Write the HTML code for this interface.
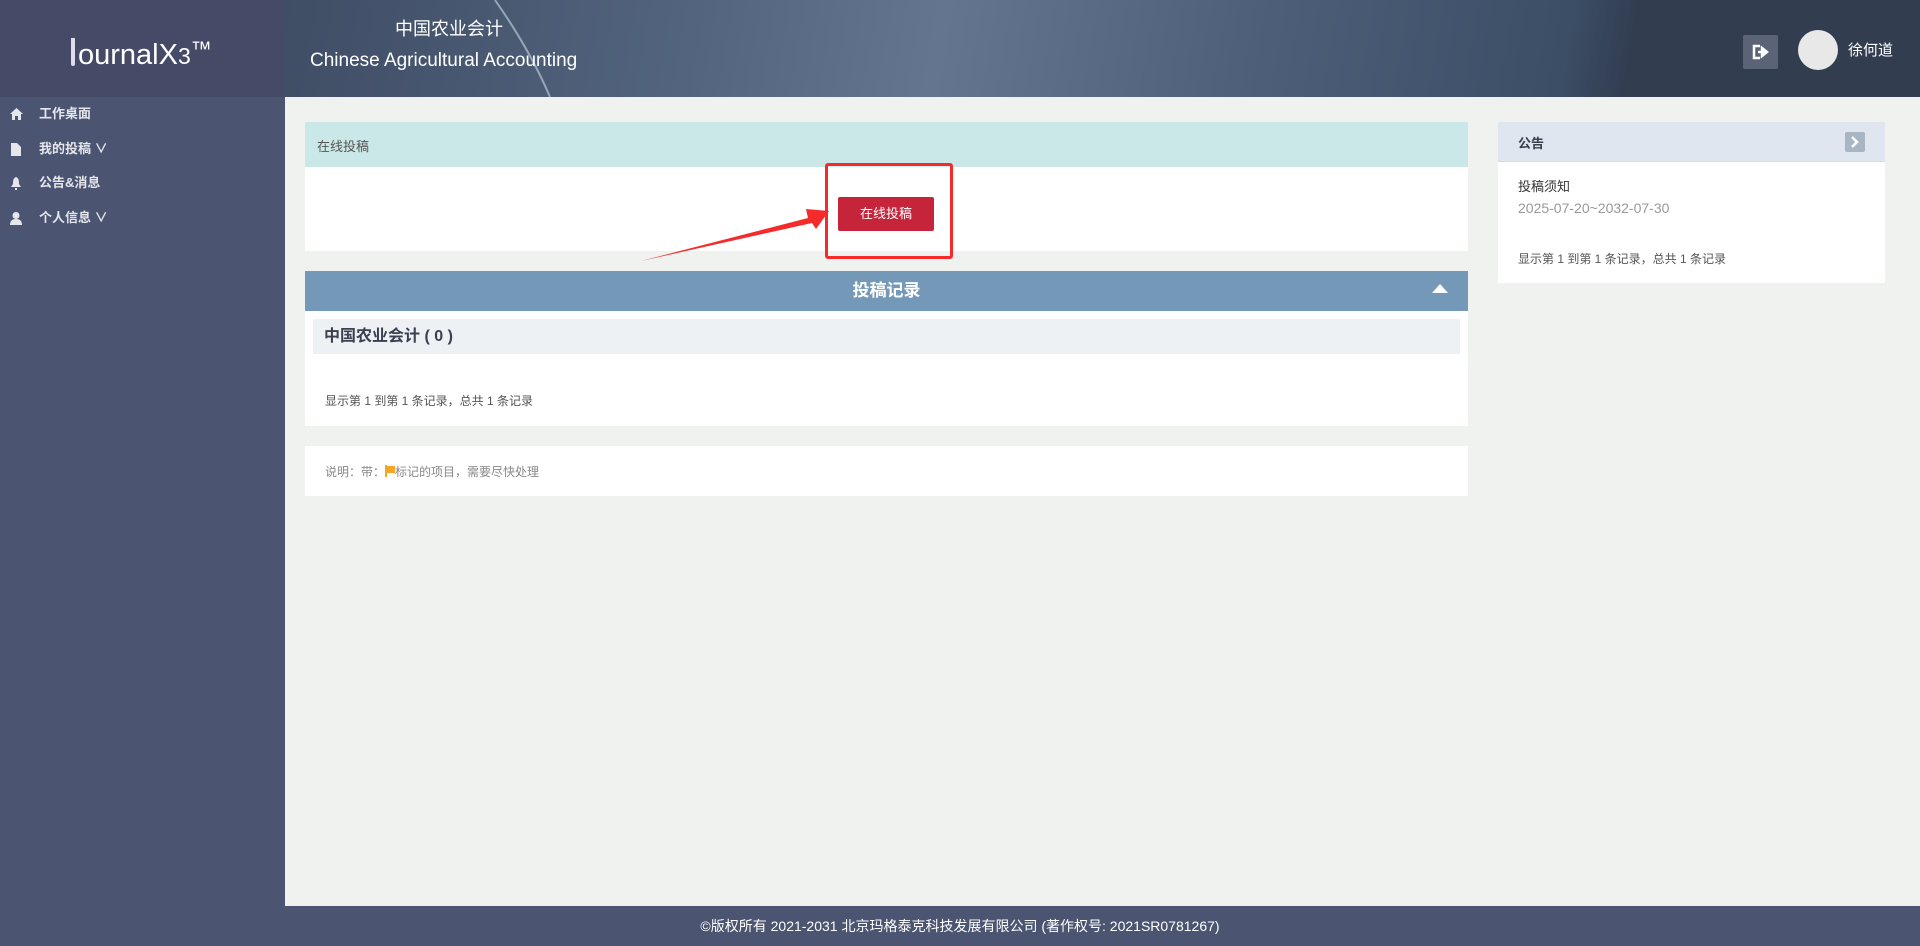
<!DOCTYPE html>
<html><head><meta charset="utf-8"><style>
*{margin:0;padding:0;box-sizing:border-box}
body{width:1920px;height:946px;overflow:hidden;background:#f0f2ef;font-family:"Liberation Sans","Noto Sans CJK SC",sans-serif;position:relative}
.a{position:absolute}
.logo{left:0;top:0;width:285px;height:97px;background:#454b66}
.hdr{left:285px;top:0;width:1635px;height:97px;background:linear-gradient(100deg,#3f4d65 0%,#53647e 25%,#64768f 40%,#4d5e78 60%,#3c4e66 78%,#323d50 82%,#323d50 100%)}
.side{left:0;top:97px;width:285px;height:809px;background:#4b5470}
.nav{left:0;width:285px;height:20px;color:#e4e6ec;font-size:13px;font-weight:bold;line-height:20px}
.nav span{position:absolute;left:39px}
.foot{left:0;top:906px;width:1920px;height:40px;background:#4b5470;color:#fff;font-size:14px;text-align:center;line-height:40px}
</style></head><body>
<div class="a logo"></div>
<div class="a" style="left:71px;top:38px;color:#fff;font-size:29px;letter-spacing:0px">
<span style="display:inline-block;width:4px;height:28px;background:#dde;vertical-align:-2px;margin-right:3px;border-radius:0 0 2px 2px"></span>ournalX<span style="font-size:23px">3</span><span style="font-size:21px;vertical-align:8px">™</span></div>
<div class="a hdr"></div>
<svg class="a" style="left:285px;top:0" width="1635" height="97"><path d="M210 0 Q245 50 265 97" stroke="#b8c4d4" stroke-width="2" fill="none" opacity=".7"/></svg>
<div class="a" style="left:395px;top:15px;color:#fff;font-size:18px">中国农业会计</div>
<div class="a" style="left:310px;top:50px;color:#fff;font-size:19px">Chinese Agricultural Accounting</div>
<div class="a" style="left:1743px;top:35px;width:35px;height:34px;background:#5a6476;border-radius:2px"></div>
<svg class="a" style="left:1752px;top:44px" width="18" height="16"><path d="M8 2H2V14H8" stroke="#fff" stroke-width="2.5" fill="none"/><path d="M6 8H12M10 4L15 8L10 12Z" stroke="#fff" stroke-width="2.5" fill="#fff"/></svg>
<div class="a" style="left:1798px;top:30px;width:40px;height:40px;border-radius:50%;background:#e8e8e8"></div>
<div class="a" style="left:1848px;top:39px;color:#fff;font-size:15px">徐何道</div>

<div class="a side"></div>
<div class="a nav" style="top:104px"><svg class="a" style="left:10px;top:4px" width="13" height="12"><path d="M6.5 0L13 6H11V12H8V8H5V12H2V6H0Z" fill="#e4e6ec"/></svg><span>工作桌面</span></div>
<div class="a nav" style="top:139px"><svg class="a" style="left:11px;top:4px" width="10" height="13"><path d="M0 0H6L10 4V13H0Z" fill="#e4e6ec"/></svg><span>我的投稿 ∨</span></div>
<div class="a nav" style="top:173px"><svg class="a" style="left:11px;top:4px" width="10" height="13"><path d="M5 0C2 1 2 4 2 7L0 10H10L8 7C8 4 8 1 5 0ZM4 11H6V13H4Z" fill="#e4e6ec"/></svg><span>公告&amp;消息</span></div>
<div class="a nav" style="top:208px"><svg class="a" style="left:10px;top:4px" width="12" height="13"><circle cx="6" cy="3.5" r="3.5" fill="#e4e6ec"/><path d="M0 13C0 8 3 7 6 7S12 8 12 13Z" fill="#e4e6ec"/></svg><span>个人信息 ∨</span></div>

<div class="a" style="left:305px;top:122px;width:1163px;height:45px;background:#cbe8e8"></div>
<div class="a" style="left:317px;top:136px;font-size:13px;color:#555">在线投稿</div>
<div class="a" style="left:305px;top:167px;width:1163px;height:84px;background:#fff"></div>
<div class="a" style="left:838px;top:197px;width:96px;height:34px;background:#c5243a;border-radius:2px;color:#fff;font-size:13px;text-align:center;line-height:34px">在线投稿</div>
<div class="a" style="left:825px;top:163px;width:128px;height:96px;border:3px solid #f52b2b;border-radius:3px"></div>
<svg class="a" style="left:630px;top:195px" width="210" height="75"><path d="M11 66L178 23L176 14L199 16L186 34L182 28Z" fill="#f52b2b"/></svg>

<div class="a" style="left:305px;top:271px;width:1163px;height:40px;background:#7499b8;color:#fff;font-size:17px;font-weight:bold;text-align:center;line-height:40px">投稿记录</div>
<svg class="a" style="left:1432px;top:284px" width="16" height="10"><path d="M0 9L8 0L16 9Z" fill="#fff"/></svg>
<div class="a" style="left:305px;top:311px;width:1163px;height:115px;background:#fff"></div>
<div class="a" style="left:313px;top:319px;width:1147px;height:35px;background:#edf1f4;color:#3a4050;font-size:16px;font-weight:bold;line-height:35px;padding-left:11px">中国农业会计 ( 0 )</div>
<div class="a" style="left:325px;top:392px;font-size:12px;color:#555">显示第 1 到第 1 条记录，总共 1 条记录</div>
<div class="a" style="left:305px;top:446px;width:1163px;height:50px;background:#fff"></div>
<div class="a" style="left:325px;top:463px;font-size:12px;color:#888">说明：带：<span style="display:inline-block;width:2px;height:12px;background:#f5a623;vertical-align:-1px"></span><span style="display:inline-block;width:8px;height:7px;background:#f5a623;vertical-align:3px"></span>标记的项目，需要尽快处理</div>

<div class="a" style="left:1498px;top:122px;width:387px;height:40px;background:#dfe6ef;border-bottom:1px solid #d4dbe3"></div>
<div class="a" style="left:1518px;top:133px;font-size:13px;font-weight:bold;color:#3a4050">公告</div>
<div class="a" style="left:1845px;top:132px;width:20px;height:20px;background:#a8b5c2;border-radius:2px"></div>
<svg class="a" style="left:1850px;top:136px" width="10" height="12"><path d="M2 1L7 6L2 11" stroke="#fff" stroke-width="2.5" fill="none"/></svg>
<div class="a" style="left:1498px;top:162px;width:387px;height:121px;background:#fff"></div>
<div class="a" style="left:1518px;top:176px;font-size:13px;color:#333">投稿须知</div>
<div class="a" style="left:1518px;top:200px;font-size:14px;color:#999">2025-07-20~2032-07-30</div>
<div class="a" style="left:1518px;top:250px;font-size:12px;color:#555">显示第 1 到第 1 条记录，总共 1 条记录</div>

<div class="a foot">©版权所有 2021-2031 北京玛格泰克科技发展有限公司 (著作权号: 2021SR0781267)</div>
</body></html>
